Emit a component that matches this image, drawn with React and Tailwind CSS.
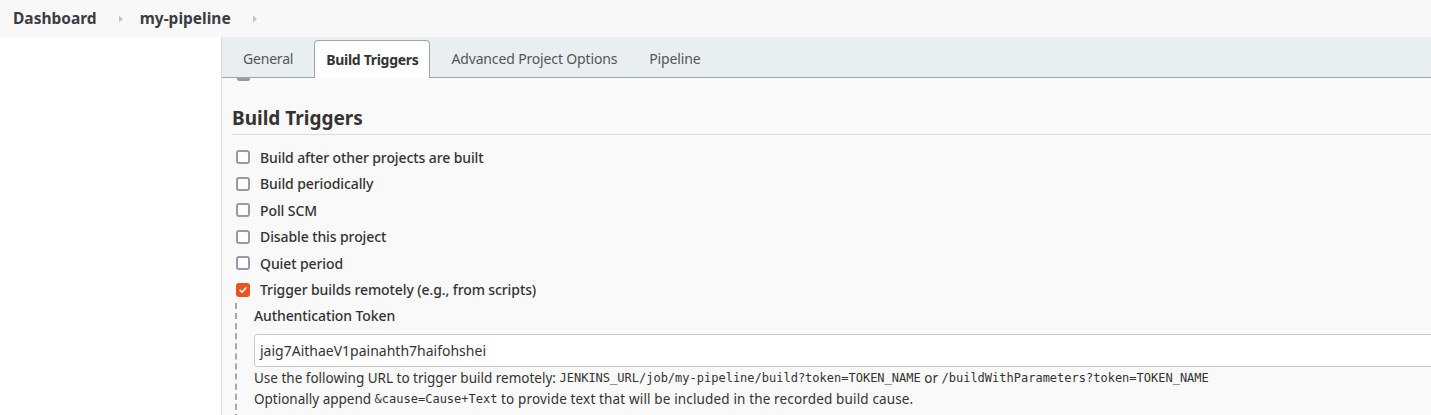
import React from "react";

const font = { fontFamily: '"Noto Sans", "DejaVu Sans", sans-serif' };
const mono = { fontFamily: '"DejaVu Sans Mono", "Liberation Mono", monospace' };

function Box({ checked }) {
  if (checked) {
    return (
      <span className="flex h-[14px] w-[14px] shrink-0 items-center justify-center rounded-[3px] bg-[#e9531f]">
        <svg width="10" height="10" viewBox="0 0 10 10" fill="none">
          <path d="M2 5.2 L4.1 7.2 L8 2.8" stroke="white" strokeWidth="1.6" strokeLinecap="round" strokeLinejoin="round" />
        </svg>
      </span>
    );
  }
  return <span className="h-[14px] w-[14px] shrink-0 rounded-[3px] border-2 border-[#9b99a6] bg-white" />;
}

function Row({ label, checked }) {
  return (
    <div className="flex h-[26.5px] items-center gap-[10px] pl-[4px]">
      <Box checked={checked} />
      <span className="text-[14px] font-medium tracking-[-0.1px] text-[#333]">{label}</span>
    </div>
  );
}

function Chevron() {
  return (
    <svg width="6" height="8" viewBox="0 0 6 8" className="ml-[21px] mr-[16px]">
      <path d="M1 0.5 L5 4 L1 7.5 Z" fill="#c4c4c4" />
    </svg>
  );
}

export default function App() {
  return (
    <div style={font} className="flex h-[415px] w-[1431px] flex-col overflow-hidden bg-white text-[#333]">
      <div className="flex h-[37px] shrink-0 items-center bg-[#f8f8f8] pl-[13px]">
        <span className="text-[15.5px] font-bold text-[#3c3c44]">Dashboard</span>
        <Chevron />
        <span className="text-[15.5px] font-bold text-[#3c3c44]">my-pipeline</span>
        <Chevron />
      </div>
      <div className="flex min-h-0 flex-1">
        <div className="w-[222px] shrink-0 border-r border-[#dcdcdc] bg-white" />
        <div className="flex min-w-0 flex-1 flex-col bg-[#f9f9f9]">
          <div className="flex h-[41px] shrink-0 items-end border-b border-[#9ea6ad] bg-[#e9eef1]">
            <div className="flex h-[38px] items-center px-[21px] text-[14px] tracking-[-0.2px] text-[#555]">General</div>
            <div className="mb-[-1px] flex h-[38px] items-center rounded-t-[4px] border border-b-0 border-[#9ea6ad] bg-white px-[11px] text-[14px] font-bold tracking-[-0.3px] text-[#333]">Build Triggers</div>
            <div className="flex h-[38px] items-center px-[21px] text-[14px] tracking-[-0.15px] text-[#555]">Advanced Project Options</div>
            <div className="flex h-[38px] items-center px-[11px] text-[14px] tracking-[-0.15px] text-[#555]">Pipeline</div>
          </div>
          <div className="flex flex-col pl-[10px]">
            <div className="ml-[5px] h-[3px] w-[13px] rounded-b-[2px] bg-[#9b99a6]" />
            <div className="mt-[23px] border-b border-[#dddddd] pb-[2px] text-[19px] font-bold leading-[28px] text-[#333]">Build Triggers</div>
            <div className="mt-[9px] flex flex-col">
              <Row label="Build after other projects are built" />
              <Row label="Build periodically" />
              <Row label="Poll SCM" />
              <Row label="Disable this project" />
              <Row label="Quiet period" />
              <Row label="Trigger builds remotely (e.g., from scripts)" checked />
            </div>
            <div className="ml-[3px] flex border-l-2 border-dashed border-[#a8a8a8] pl-[17px]">
              <div className="flex flex-col">
                <div className="pt-[2px] text-[14px] font-medium tracking-[-0.1px] text-[#333]">Authentication Token</div>
                <div className="mt-[8px] flex h-[33px] w-[1300px] items-center rounded-[3px] border border-[#c8c8c8] bg-white px-[5px] text-[14px] text-[#333]">jaig7AithaeV1painahth7haifohshei</div>
                <div className="mt-[1px] flex h-[21px] items-center whitespace-pre text-[13.5px] leading-[21px] text-[#333]">
                  <span>Use the following URL to trigger build remotely: </span>
                  <span style={mono} className="text-[12px]">JENKINS_URL/job/my-pipeline/build?token=TOKEN_NAME</span>
                  <span> or </span>
                  <span style={mono} className="text-[12px]">/buildWithParameters?token=TOKEN_NAME</span>
                </div>
                <div className="flex h-[21px] items-center whitespace-pre text-[13.5px] leading-[21px] text-[#333]">
                  <span>Optionally append </span>
                  <span style={mono} className="text-[12px]">&amp;cause=Cause+Text</span>
                  <span className="tracking-[0.15px]"> to provide text that will be included in the recorded build cause.</span>
                </div>
                <div className="h-[20px]" />
              </div>
            </div>
          </div>
        </div>
      </div>
    </div>
  );
}
